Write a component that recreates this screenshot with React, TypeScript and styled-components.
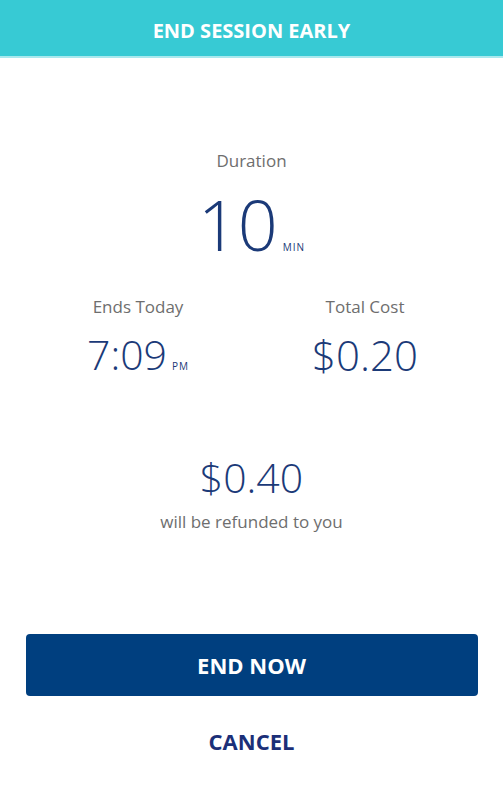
import React from 'react'
import styled, { createGlobalStyle } from 'styled-components'

const GlobalStyle = createGlobalStyle`
    html, body {
        margin: 0;
        padding: 0;
        background: #ffffff;
    }
    body {
        font-family: "Open Sans", "Noto Sans", Arial, sans-serif;
    }
`

const Page = styled.div`
    width: 503px;
    height: 800px;
    display: flex;
    flex-direction: column;
    background: #fff;
`

const Header = styled.div`
    height: 58px;
    background: #37cad4;
    border-bottom: 2px solid #a9e9ee;
    display: flex;
    align-items: center;
    justify-content: center;
    padding-top: 4px;
    box-sizing: border-box;
    color: #fff;
    font-weight: 700;
    font-size: 20px;
`

const Body = styled.div`
    flex: 1;
    display: flex;
    flex-direction: column;
    align-items: center;
    padding: 0 25px;
`

const Label = styled.div`
    color: #6e6e6e;
    font-size: 17px;
    line-height: 20px;
`

const DurationBlock = styled.div`
    margin-top: 93px;
    display: flex;
    flex-direction: column;
    align-items: center;
`

const Value = styled.div<{ size: number }>`
    color: #1b3a78;
    font-weight: 300;
    font-size: ${p => p.size}px;
    line-height: 1;
    display: flex;
    align-items: baseline;
`

const Unit = styled.span`
    font-size: 10px;
    font-weight: 400;
    margin-left: 5px;
    letter-spacing: 1px;
`

const Cards = styled.div`
    margin-top: 18px;
    width: 454px;
    height: 122px;
    display: grid;
    grid-template-columns: 1fr 1fr;
`

const Card = styled.div`
    display: flex;
    flex-direction: column;
    align-items: center;
    padding-top: 20px;
    gap: 17px;
`

const Refund = styled.div`
    margin-top: 58px;
    display: flex;
    flex-direction: column;
    align-items: center;
    gap: 14px;
`

const Actions = styled.div`
    margin-top: auto;
    margin-bottom: 44px;
    width: 100%;
    display: flex;
    flex-direction: column;
    align-items: center;
    gap: 30px;
`

const PrimaryButton = styled.button`
    width: 452px;
    height: 62px;
    background: #003f7f;
    border: none;
    border-radius: 4px;
    color: #fff;
    font-family: "Open Sans", "Noto Sans", Arial, sans-serif;
    font-weight: 700;
    font-size: 22px;
    cursor: pointer;
`

const TextButton = styled.button`
    background: none;
    border: none;
    color: #1b2f78;
    font-family: "Open Sans", "Noto Sans", Arial, sans-serif;
    font-weight: 700;
    font-size: 22px;
    padding: 0;
    cursor: pointer;
`

export default function App() {
    return (
        <Page>
            <GlobalStyle />
            <Header>END SESSION EARLY</Header>
            <Body>
                <DurationBlock>
                    <Label>Duration</Label>
                    <Value size={70} style={{ marginTop: 18 }}>
                        10<Unit>MIN</Unit>
                    </Value>
                </DurationBlock>
                <Cards>
                    <Card>
                        <Label>Ends Today</Label>
                        <Value size={41}>
                            7:09<Unit>PM</Unit>
                        </Value>
                    </Card>
                    <Card>
                        <Label>Total Cost</Label>
                        <Value size={42}>$0.20</Value>
                    </Card>
                </Cards>
                <Refund>
                    <Value size={41}>$0.40</Value>
                    <Label>will be refunded to you</Label>
                </Refund>
                <Actions>
                    <PrimaryButton>END NOW</PrimaryButton>
                    <TextButton>CANCEL</TextButton>
                </Actions>
            </Body>
        </Page>
    )
}
